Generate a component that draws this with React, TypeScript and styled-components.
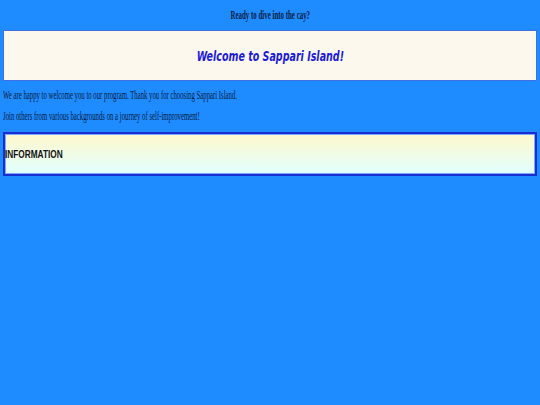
import React from "react";
import styled, { createGlobalStyle } from "styled-components";

const GlobalStyle = createGlobalStyle`
  html, body {
    margin: 0;
    padding: 0;
    background: #1e8cff;
  }
  body {
    font-family: "Liberation Serif", "Times New Roman", serif;
  }
`;

const Page = styled.div`
  padding: 8px 3px;
  display: flex;
  flex-direction: column;
`;

const Tagline = styled.div`
  text-align: center;
  font-weight: bold;
  font-size: 11.5px;
  line-height: 14px;
  color: #0a1a40;
  margin-bottom: 8px;
`;

// the page text is drawn in a narrow face, so squeeze it sideways
const Squeeze = styled.span<{ $origin?: string; $scale?: number }>`
  display: inline-block;
  white-space: nowrap;
  transform: scaleX(${(p) => p.$scale ?? 0.54});
  transform-origin: ${(p) => p.$origin ?? "left"} center;
`;

const Banner = styled.header`
  height: 49px;
  background: #fdf8ee;
  border: 1px solid #3f6fe0;
  display: flex;
  align-items: center;
  justify-content: center;
`;

const BannerTitle = styled.h1`
  margin: 0;
  font-family: "DejaVu Sans", sans-serif;
  font-style: italic;
  font-weight: bold;
  font-size: 14px;
  color: #1a1ad8;
`;

const Text = styled.p<{ $gap?: number }>`
  margin: ${(p) => p.$gap ?? 9}px 0 0;
  font-size: 12.5px;
  line-height: 12px;
  color: #0a1a40;
`;

const InfoBox = styled.section`
  margin-top: 10px;
  height: 40px;
  border: 2px solid #1a2ed0;
  box-shadow: inset 0 0 0 1px #7aa8ff;
  background: linear-gradient(#fff8cc, #e0ffff);
  display: flex;
  align-items: center;
`;

const InfoTitle = styled.h2`
  margin: 0;
  font-family: "Liberation Sans", Arial, sans-serif;
  font-weight: bold;
  font-size: 11px;
  color: #111;
`;

export default function App() {
  return (
    <>
      <GlobalStyle />
      <Page>
        <Tagline>
          <Squeeze $origin="center" $scale={0.6}>
            Ready to dive into the cay?
          </Squeeze>
        </Tagline>
        <Banner>
          <BannerTitle>
            <Squeeze $origin="center" $scale={0.68}>
              Welcome to Sappari Island!
            </Squeeze>
          </BannerTitle>
        </Banner>
        <Text $gap={8}>
          <Squeeze>
            We are happy to welcome you to our program. Thank you for choosing
            Sappari Island.
          </Squeeze>
        </Text>
        <Text>
          <Squeeze>
            Join others from various backgrounds on a journey of
            self-improvement!
          </Squeeze>
        </Text>
        <InfoBox>
          <InfoTitle>
            <Squeeze $scale={0.75}>INFORMATION</Squeeze>
          </InfoTitle>
        </InfoBox>
      </Page>
    </>
  );
}
